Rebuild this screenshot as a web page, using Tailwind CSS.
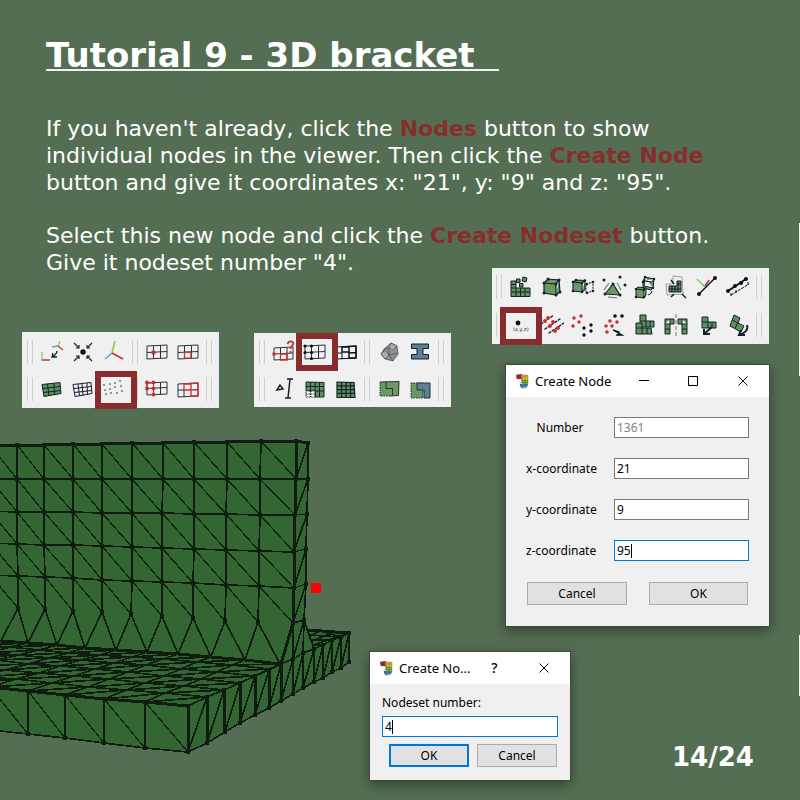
<!DOCTYPE html>
<html lang="en">
<head>
<meta charset="utf-8">
<meta name="viewport" content="width=device-width, initial-scale=1">
<title>Tutorial 9 - 3D bracket</title>
<script src="https://cdn.jsdelivr.net/npm/@tailwindcss/browser@4"></script>
</head>
<body class="bg-[#546e53] font-['DejaVu_Sans',sans-serif] text-white">
<main class="relative min-h-screen overflow-hidden">

  <!-- Right edge strips -->
  <div class="absolute right-0 top-[223px] h-[153px] w-px bg-white"></div>
  <div class="absolute right-0 top-[635px] h-[61px] w-px bg-white"></div>

  <!-- Meshed bracket -->
  <svg class="absolute left-0 top-[430px]" width="360" height="330" viewBox="0 430 360 330" role="img" aria-label="Meshed bracket with a new node">
    <path fill="#336633" d="M0 445L295 441L308 443L307 514L305 620L309 630L349 633L349 662L188 752L0 731Z"/>
    <g id="mesh" fill="none" stroke="#0f1c10" stroke-linejoin="round"></g>
    <rect x="311" y="583" width="10" height="10" fill="#ff0000"/>
  </svg>

  <!-- Slide text -->
  <header class="pl-[46px] pt-[34px]">
    <h1 class="text-[34px]/[42px] font-bold"><span class="inline-block h-[37px] w-[453px] border-b-2 border-white/90 whitespace-nowrap">Tutorial 9 - 3D bracket</span></h1>
  </header>
  <section class="flex flex-col gap-[26px] pl-[46px] pt-[39px] text-[22px]/[27px]">
    <p>If you haven't already, click the <b class="text-[#882d2e]">Nodes</b> button to show<br>individual nodes in the viewer. Then click the <b class="text-[#882d2e]">Create Node</b><br>button and give it coordinates x: "21", y: "9" and z: "95".</p>
    <p>Select this new node and click the <b class="text-[#882d2e]">Create Nodeset</b> button.<br>Give it nodeset number "4".</p>
  </section>

  <!-- View toolbar -->
  <div role="toolbar" aria-label="View" class="absolute left-[22px] top-[332px] flex w-[197px] flex-col bg-[#f0f0f0]">
    <div class="flex h-[38px] items-center gap-[3px] pl-[5px] pt-[2px]">
      <i class="h-6 w-[6px] border-x border-[#cfcfcf]"></i>
      <div class="flex">
        <button aria-label="Rotate axes" class="grid h-8 w-[31px] place-items-center"><svg width="24" height="24" viewBox="0 0 24 24" fill="none" stroke-width="1.3"><path stroke="#9acb4b" d="M2 12v8M20 1l-2 5"/><path stroke="#c8302f" d="M2 20h8M18 6l5 4"/><path stroke="#5aa9c9" d="M18 6l-6 1M1 20h3"/><path stroke="#14202b" d="M17 11q0 3-5 6m1-4l-1 4h5"/></svg></button>
        <button aria-label="Fit view" class="grid h-8 w-[31px] place-items-center"><svg width="24" height="24" viewBox="0 0 24 24" fill="none" stroke="#14202b" stroke-width="1.1"><circle cx="12" cy="12" r="2.2" fill="#07131d"/><path d="M3 3l5 5m0-3v3H5M21 3l-5 5m0-3v3h3M3 21l5-5m0 3v-3H5M21 21l-5-5m0 3v-3h3"/></svg></button>
        <button aria-label="Show axes" class="grid h-8 w-[31px] place-items-center"><svg width="24" height="24" viewBox="0 0 24 24" fill="none" stroke-width="1.6"><path stroke="#8ecb3f" d="M10 13L13 1"/><path stroke="#5aa9c9" d="M10 13l-7 6"/><path stroke="#c8302f" d="M10 13l11 6"/></svg></button>
      </div>
      <i class="h-6 w-[6px] border-x border-[#cfcfcf]"></i>
      <div class="flex">
        <button aria-label="Select node" class="grid h-8 w-[31px] place-items-center"><svg width="24" height="24" viewBox="0 0 24 24" fill="none" stroke="#26333d"><path d="M2 6l20-1v13L2 19zM8.500 6v13M15.500 5.500v13M2 12.500l20-1"/><circle cx="8.500" cy="12.500" r="2.200" fill="#c8302f" stroke="none"/></svg></button>
        <button aria-label="Select element" class="grid h-8 w-[31px] place-items-center"><svg width="24" height="24" viewBox="0 0 24 24" fill="none" stroke="#26333d"><path d="M2 6l20-1v13L2 19zM8.500 6v13M15.500 5.500v13M2 12.500l20-1"/><path stroke="#c8302f" stroke-width="1.300" d="M8.500 12.200h6.500v6H8.500z"/></svg></button>
      </div>
      <i class="h-6 w-[6px] border-x border-[#cfcfcf]"></i>
    </div>
    <div class="flex h-[38px] items-center gap-[3px] pl-[5px]">
      <i class="h-6 w-[6px] border-x border-[#cfcfcf]"></i>
      <div class="flex">
        <button aria-label="Shaded" class="grid h-8 w-[31px] place-items-center"><svg width="24" height="24" viewBox="0 0 24 24" fill="#5f915b" stroke="#14202b"><path d="M2 7.500l18-2 1 11-17 3zM7.500 7l1.500 12M14 6l.5 12M3 11.500l17-2M3.500 15.500l17-2"/></svg></button>
        <button aria-label="Wireframe" class="grid h-8 w-[31px] place-items-center"><svg width="24" height="24" viewBox="0 0 24 24" fill="none" stroke="#14202b"><path d="M2 7.500l18-2 1 11-17 3zM7 7l1.500 12M11 6.500l1 12M16 6l.5 12M3 11.500l17-2M3.500 15.500l17-2"/></svg></button>
        <button aria-label="Nodes" class="grid h-8 w-[31px] place-items-center"><svg width="24" height="24" viewBox="0 0 24 24" fill="none" stroke="#14202b" stroke-width="1.600" stroke-linecap="round"><path d="M2 8h0M8 7h0M13 6h0M18 4h0M3 13h0M8 12h0M13 10h0M19 9h0M4 17h0M9 16h0M15 16h0M20 14h0" /></svg></button>
      </div>
      <i class="h-6 w-[6px] border-x border-[#cfcfcf]"></i>
      <div class="flex">
        <button aria-label="Select nodes" class="grid h-8 w-[31px] place-items-center"><svg width="24" height="24" viewBox="0 0 24 24" fill="none" stroke="#26333d"><path d="M2 6l20-1v12L2 18zM8.500 6v12M15.500 5.500v12M2 11.500l20-1"/><path stroke="#c8302f" d="M2 6h6.500v12M2 6v5.500h6.500"/><path stroke="#c8302f" stroke-width="4" stroke-linecap="round" d="M2 5.500h0M8.500 5.500h0M2 11.500h0M8.500 11.500h0M8.500 17.500h0"/></svg></button>
        <button aria-label="Select elements" class="grid h-8 w-[31px] place-items-center"><svg width="24" height="24" viewBox="0 0 24 24" fill="none" stroke="#26333d"><path d="M2 7l20-1v13L2 20zM2 13h6M8 13v7"/><path stroke="#c8302f" stroke-width="1.300" d="M8 7l14-1v13h-7v-6H8zM15 6.500V13l7-.5"/></svg></button>
      </div>
      <i class="h-6 w-[6px] border-x border-[#cfcfcf]"></i>
    </div>
    <span class="pointer-events-none absolute left-[73px] top-[39px] h-[38px] w-[42px] border-6 border-[#882d2e]"></span>
  </div>

  <!-- Sets toolbar -->
  <div role="toolbar" aria-label="Sets" class="absolute left-[254px] top-[333px] flex w-[197px] flex-col bg-[#f0f0f0]">
    <div class="flex h-[37px] items-center gap-[3px] pl-[5px]">
      <i class="h-6 w-[6px] border-x border-[#cfcfcf]"></i>
      <div class="flex">
        <button aria-label="Query" class="grid h-8 w-[31px] place-items-center"><svg width="24" height="24" viewBox="0 0 24 24" fill="none" stroke="#26333d"><path d="M2 8l19-1v12L2 20zM8.500 8v12M15 8v12M2 14l19-1"/><path stroke="#c8302f" stroke-width="1.300" d="M8.500 14H15v6H8.500z"/><circle cx="2" cy="14" r="1.800" fill="#c8302f" stroke="none"/><path stroke="#c8302f" stroke-width="1.800" d="M15.500 4q1-3 4-2.500 3 1 1 4-2 1.500-2 3.500M18.500 11v2"/></svg></button>
        <button aria-label="Create nodeset" class="grid h-8 w-[31px] place-items-center"><svg width="24" height="24" viewBox="0 0 24 24" fill="none" stroke="#26333d"><path d="M2 6l20-1v13L2 19zM8.500 6v13M15.500 5.500v13M2 12.500l20-1"/><path stroke="#07131d" stroke-width="3.200" stroke-linecap="round" d="M2 6h0M8.500 6h0M2 12.500h0M8.500 12.500h0M8.500 18.500h0"/></svg></button>
        <button aria-label="Create elementset" class="grid h-8 w-[31px] place-items-center"><svg width="24" height="24" viewBox="0 0 24 24" fill="none" stroke="#07131d"><path d="M2 7l20-1v12L2 19zM2 13h6M8 13v6"/><path stroke-width="1.500" d="M8 7l14-1v12h-7v-6H8zM15 6.500V13l7-.5"/></svg></button>
      </div>
      <i class="h-6 w-[6px] border-x border-[#cfcfcf]"></i>
      <div class="flex">
        <button aria-label="Material" class="grid h-8 w-[31px] place-items-center"><svg width="24" height="24" viewBox="0 0 24 24" fill="#8d9296" stroke="#50565c" stroke-width=".8" stroke-linejoin="round"><path d="M7 9l7-6 6 3 1 8-5 7-8-2-4-5z"/><path fill="#a9adb0" d="M14 3l6 3-4 4-4-2zM4 14l4-4 4 5-4 4z"/><path d="M12 8l0 7 9-2M12 15l4 6M7 9l5-1"/></svg></button>
        <button aria-label="Section" class="grid h-8 w-[31px] place-items-center"><svg width="24" height="24" viewBox="0 0 24 24" fill="#5b7f97" stroke="#14202b"><path d="M3.500 4h17v4.500h-5.500v6h5.500V19h-17v-4.500H9v-6H3.500z"/></svg></button>
      </div>
      <i class="h-6 w-[6px] border-x border-[#cfcfcf]"></i>
    </div>
    <div class="flex h-[37px] items-center gap-[3px] pl-[5px]">
      <i class="h-6 w-[6px] border-x border-[#cfcfcf]"></i>
      <div class="flex">
        <button aria-label="Beam orientation" class="grid h-8 w-[31px] place-items-center"><svg width="24" height="24" viewBox="0 0 24 24" fill="none" stroke="#14202b" stroke-width="1.500"><path d="M5 13l3-5 3 4z"/><path d="M16 21l2-19M15 2h6M13 21h6"/></svg></button>
        <button aria-label="Part mesh" class="grid h-8 w-[31px] place-items-center"><svg width="24" height="24" viewBox="0 0 24 24" fill="#5f915b" stroke="#14202b"><path d="M3 5l18 .5v14.500h-9v-6H3zM7.500 5v9M12 5v15M16.500 5v15M3 9.500h18M12 14h9"/><path fill="#fff" stroke-dasharray="1.500 1" d="M3 14h9v6H3zM7.500 14v6M3 17h9"/></svg></button>
        <button aria-label="Full mesh" class="grid h-8 w-[31px] place-items-center"><svg width="24" height="24" viewBox="0 0 24 24" fill="#5f915b" stroke="#14202b" stroke-width="1.200"><path d="M3 5l17 .5 1 15H3zM7.500 5v15M12 5v15M16.500 5v15M3 8.800h17.500M3 12.600h17.500M3 16.400h18"/></svg></button>
      </div>
      <i class="h-6 w-[6px] border-x border-[#cfcfcf]"></i>
      <div class="flex">
        <button aria-label="Split" class="grid h-8 w-[31px] place-items-center"><svg width="24" height="24" viewBox="0 0 24 24" fill="#6a9a62" stroke="#26333d"><path stroke="none" d="M3 5l19-.5V18l-9 1H3z"/><path fill="none" stroke-dasharray="1.500 1" d="M13 19H3V5"/><path fill="none" d="M3 5l19-.5-.5 14-8.500.500M9 5v6.500h6.500V18.500"/></svg></button>
        <button aria-label="Merge" class="grid h-8 w-[31px] place-items-center"><svg width="24" height="24" viewBox="0 0 24 24" fill="#6a9a62" stroke="#26333d"><path stroke-dasharray="1.500 1" d="M3 6h12v15H3z"/><path fill="#5b7f97" d="M9 6h13v15h-6v-8H9z"/></svg></button>
      </div>
      <i class="h-6 w-[6px] border-x border-[#cfcfcf]"></i>
    </div>
    <span class="pointer-events-none absolute left-[42px] top-0 h-[38px] w-[42px] border-6 border-[#882d2e]"></span>
  </div>

  <!-- Mesh editing toolbar -->
  <div role="toolbar" aria-label="Mesh editing" class="absolute left-[492px] top-[268px] flex w-[277px] flex-col bg-[#f0f0f0]">
    <div class="flex h-[38px] items-center gap-[3px] pl-1">
      <i class="h-6 w-[6px] border-x border-[#cfcfcf]"></i>
      <div class="flex">
        <button aria-label="Create elements" class="grid h-8 w-[31px] place-items-center"><svg width="24" height="24" viewBox="0 0 24 24" fill="#5f915b" stroke="#14202b"><path d="M2 6h5v7h14v8.500H2zM2 9.500h5M2 13h5v8.500M11.500 13v8.500M16 13v8.500M2 17h19"/><path d="M7.500 4h3.500v3.500H7.500zM14 2l4 1-1 4-4-1zM10.500 8.500h3.500v3.500h-3.500z"/></svg></button>
        <button aria-label="Copy element" class="grid h-8 w-[31px] place-items-center"><svg width="24" height="24" viewBox="0 0 24 24" fill="#6a9a62" stroke="#14202b" stroke-width="1.200"><path d="M4 8l12 1v11L4 18zM4 8l4-4 11 1-3 4M19 5l1 12-4 3"/><path stroke-width="3" stroke-linecap="round" d="M4 8h0M16 9h0M4 18h0M16 20h0M8 4h0M19 5h0M20 17h0"/></svg></button>
        <button aria-label="Extrude" class="grid h-8 w-[31px] place-items-center"><svg width="24" height="24" viewBox="0 0 24 24" fill="#6a9a62" stroke="#14202b" stroke-width="1.100"><path d="M2 7l9 1v9l-9-1zM2 7l3-2 9 .5-3 2.500M14 5.500v9L11 17"/><path fill="none" stroke-dasharray="2 1" d="M15 9l7-2v9l-7 2z"/><path stroke-width="2.600" stroke-linecap="round" d="M2 7h0M11 8h0M2 16h0M11 17h0M5 5h0M14 5.500h0M16 9h0M22 7h0M16 18h0M22 16h0"/></svg></button>
        <button aria-label="Create element" class="grid h-8 w-[31px] place-items-center"><svg width="26" height="24" viewBox="0 0 26 24" fill="#6a9a62" stroke="#14202b" stroke-width="1.100"><path d="M4 19L12 9l7 11z"/><path fill="none" stroke="#6b747b" d="M3 15l5-7M16 8l4 7M7 22l9 1"/><path stroke-width="3" stroke-linecap="round" d="M4 19h0M12 9h0M19 20h0M3 5h0M19 2h0M24 10h0"/></svg></button>
        <button aria-label="Copy elements" class="grid h-8 w-[31px] place-items-center"><svg width="24" height="24" viewBox="0 0 24 24" fill="#6a9a62" stroke="#14202b"><path d="M12 2l9 2-1 9-9-2zM12 2l-2 4 0 7 8 2 2-2M10 6l9 1 2-3M3 14l8 1v8l-8-1zM3 14l2-2 8 1-2 2M13 13v7l-2 3"/><path stroke-width="2.500" stroke-linecap="round" d="M12 2h0M21 4h0M20 13h0M10 7h0M3 14h0M11 15h0M3 22h0M11 22h0"/><path fill="none" d="M15 20q4-1 4-4"/></svg></button>
        <button aria-label="Scale" class="grid h-8 w-[31px] place-items-center"><svg width="24" height="24" viewBox="0 0 24 24" fill="none" stroke="#14202b"><path stroke="#9a9fa3" d="M2 9h7V1l9 1 1 17-16 1z"/><path fill="#5f915b" d="M5 11h8V6h4v11H5zM5 14h12M8 11v6M11 11v6M14 6v11M13 9h4"/><path d="M7 22l3-3M22 23l-4-4M7 5l3 4" stroke-width="1.500"/></svg></button>
        <button aria-label="Align line" class="grid h-8 w-[31px] place-items-center"><svg width="24" height="24" viewBox="0 0 24 24" fill="none" stroke-width="1.500"><path stroke="#8ecb3f" d="M2 4l7 7"/><path stroke="#c8302f" d="M10 11l4-6"/><path stroke="#5aa9c9" d="M8 10l4 2"/><path stroke="#07131d" d="M4 19L20 3"/><path stroke="#07131d" stroke-width="4" stroke-linecap="round" d="M4 19h0M20 3h0"/></svg></button>
        <button aria-label="Create beam" class="grid h-8 w-[31px] place-items-center"><svg width="24" height="24" viewBox="0 0 24 24" fill="none" stroke="#07131d"><path stroke-width="2" d="M2 16L20 4"/><path stroke-width="4" stroke-linecap="round" d="M2 16h0M9 11h0M15 8h0M20 4h0"/><path stroke-dasharray="3 1" d="M5 20L23 9M5 18v4M10 15v4M22 7v4"/></svg></button>
      </div>
      <i class="h-6 w-[6px] border-x border-[#cfcfcf]"></i>
    </div>
    <div class="flex h-[38px] items-center gap-[3px] pl-1">
      <i class="h-6 w-[6px] border-x border-[#cfcfcf]"></i>
      <div class="flex">
        <button aria-label="Create node" class="grid h-8 w-[31px] place-items-center"><svg width="24" height="24" viewBox="0 0 24 24"><circle cx="9" cy="10" r="2.400" fill="#07131d"/><text x="4" y="18" font-size="5" font-family="DejaVu Sans" fill="#14202b">(x,y,z)</text></svg></button>
        <button aria-label="Copy nodes" class="grid h-8 w-[31px] place-items-center"><svg width="24" height="24" viewBox="0 0 24 24" fill="none" stroke="#14202b" stroke-width="1.400" stroke-linecap="round"><path stroke-dasharray="2 2" d="M1 11L14 2M5 16L20 6M9 20L24 10"/><path stroke="#c8302f" stroke-width="3.800" d="M5 8h0M8 5h0M10 13h0M13 9h0M15 18h0M18 15h0"/></svg></button>
        <button aria-label="Move nodes" class="grid h-8 w-[31px] place-items-center"><svg width="24" height="24" viewBox="0 0 24 24" fill="none" stroke-width="3.400" stroke-linecap="round"><path stroke="#c8302f" d="M3 5h0M10 3h0M8 9h0M2 13h0"/><path stroke="#07131d" d="M13 15h0M20 12h0M20 18h0M13 22h0"/></svg></button>
        <button aria-label="Translate nodes" class="grid h-8 w-[31px] place-items-center"><svg width="24" height="24" viewBox="0 0 24 24" fill="none" stroke-width="3.600" stroke-linecap="round"><path stroke="#c8302f" d="M8 8h0M4 13h0M10 13h0M15 9h0M5 19h0"/><path stroke="#07131d" d="M13 3h0M20 3h0"/><path stroke="#07131d" stroke-width="1.400" fill="#07131d" d="M11 17l9 5-5 0 2-3z"/></svg></button>
        <button aria-label="Copy and stack" class="grid h-8 w-[31px] place-items-center"><svg width="24" height="24" viewBox="0 0 24 24" fill="#5f915b" stroke="#14202b"><path d="M7 2h6v6h8v6H7zM7 8h6v6M17 8v6"/><path d="M3 10h6v5h9l1 6H3zM3 15h6v6M14 15v6"/></svg></button>
        <button aria-label="Mirror" class="grid h-8 w-[31px] place-items-center"><svg width="26" height="24" viewBox="0 0 26 24" fill="#5f915b" stroke="#14202b"><path d="M2 6h9v5H7v10H2zM2 11h5V6M2 16h5M24 6h-9v5h4v10h5zM24 11h-5V6M24 16h-5"/><path stroke="#777" stroke-dasharray="4 2" d="M13 1v23"/></svg></button>
        <button aria-label="Move elements" class="grid h-8 w-[31px] place-items-center"><svg width="24" height="24" viewBox="0 0 24 24" fill="#5f915b" stroke="#14202b"><path d="M7 4h6v5h8v6H7zM7 9h6v6M17 9v6"/><path fill="none" stroke-width="2" d="M17 14l-8 7M9 16v5h6"/></svg></button>
        <button aria-label="Rotate elements" class="grid h-8 w-[31px] place-items-center"><svg width="24" height="24" viewBox="0 0 24 24" fill="#5f915b" stroke="#14202b"><path d="M8 2l6 3-2 5 6 3-3 6L4 13zM6 7l6 3-3 5"/><path fill="none" stroke-width="2" d="M21 12q2 7-8 10m2-5l-2 5h6"/></svg></button>
      </div>
      <i class="h-6 w-[6px] border-x border-[#cfcfcf]"></i>
    </div>
    <span class="pointer-events-none absolute left-2 top-[39px] h-[38px] w-[42px] border-6 border-[#882d2e]"></span>
  </div>

  <!-- Create Node window -->
  <section role="dialog" aria-labelledby="node-title" class="absolute left-[505px] top-[364px] flex w-[265px] flex-col border border-[#3c4a3b] bg-[#f0f0f0] font-['Noto_Sans',sans-serif] text-[12px]/[16px] text-black shadow-[0_4px_12px_rgba(0,0,0,0.4)]">
    <div class="flex h-8 items-center bg-white pl-[10px]">
      <svg width="13" height="15" viewBox="0 0 13 15"><path fill="#b3302e" d="M0 1l6-1v5H1z"/><path fill="#e8c12c" d="M5 1l7 0v5H6z"/><path fill="#74b848" d="M6 6h6v4H6z"/><path fill="#3f90c0" d="M4 10h8l-1 3-5 1-2-2z"/><path fill="none" stroke="#333" stroke-opacity=".6" stroke-width=".5" d="M0 3h12M5 6h7M5 8.500h7M4 11h8M3 0v5M6 0v14M9 1v12M0 1h12v9l-2 4H5l-1-4 2-4V5H1z"/></svg>
      <h2 id="node-title" class="ml-[6px] flex-1 text-[13px] whitespace-nowrap">Create Node</h2>
      <button aria-label="Minimize" class="grid h-8 w-[49px] place-items-center"><svg width="11" height="11" viewBox="0 0 11 11" stroke="#000"><path d="M0 4.500h10"/></svg></button>
      <button aria-label="Maximize" class="grid h-8 w-[49px] place-items-center"><svg width="11" height="11" viewBox="0 0 11 11" fill="none" stroke="#000"><path d="M.5.500h9v9h-9z"/></svg></button>
      <button aria-label="Close" class="grid h-8 w-[51px] place-items-center"><svg width="11" height="11" viewBox="0 0 11 11" stroke="#000"><path d="M.5.500l9 9M9.500.500l-9 9"/></svg></button>
    </div>
    <form class="flex flex-col gap-5 px-5 pt-5 pb-[21px]">
      <div class="flex items-center"><label for="num" class="w-[68px] text-center whitespace-nowrap">Number</label><input id="num" value="1361" disabled class="ml-5 h-[21px] w-[135px] border border-[#7a7a7a] bg-white px-[2px] text-[#838383]"></div>
      <div class="flex items-center"><label for="cx" class="w-[68px] text-center whitespace-nowrap">x-coordinate</label><input id="cx" value="21" class="ml-5 h-[21px] w-[135px] border border-[#7a7a7a] bg-white px-[2px]"></div>
      <div class="flex items-center"><label for="cy" class="w-[68px] text-center whitespace-nowrap">y-coordinate</label><input id="cy" value="9" class="ml-5 h-[21px] w-[135px] border border-[#7a7a7a] bg-white px-[2px]"></div>
      <div class="relative flex items-center"><label for="cz" class="w-[68px] text-center whitespace-nowrap">z-coordinate</label><input id="cz" value="95" class="ml-5 h-[21px] w-[135px] border border-[#0078d7] bg-white px-[2px]"><span class="absolute left-[105px] top-1 h-[14px] w-px bg-black"></span></div>
      <div class="flex gap-[22px] pt-px pl-px"><button type="button" class="h-[23px] w-[100px] border border-[#adadad] bg-[#e1e1e1]">Cancel</button><button type="button" class="h-[23px] w-[99px] border border-[#adadad] bg-[#e1e1e1]">OK</button></div>
    </form>
  </section>

  <!-- Create Nodeset window -->
  <section role="dialog" aria-labelledby="set-title" class="absolute left-[369px] top-[651px] flex w-[202px] flex-col border border-[#3c4a3b] bg-[#f0f0f0] font-['Noto_Sans',sans-serif] text-[12px]/[16px] text-black shadow-[0_4px_12px_rgba(0,0,0,0.4)]">
    <div class="flex h-8 items-center bg-white pl-[10px]">
      <svg class="shrink-0" width="13" height="15" viewBox="0 0 13 15"><path fill="#b3302e" d="M0 1l6-1v5H1z"/><path fill="#e8c12c" d="M5 1l7 0v5H6z"/><path fill="#74b848" d="M6 6h6v4H6z"/><path fill="#3f90c0" d="M4 10h8l-1 3-5 1-2-2z"/><path fill="none" stroke="#333" stroke-opacity=".6" stroke-width=".5" d="M0 3h12M5 6h7M5 8.500h7M4 11h8M3 0v5M6 0v14M9 1v12M0 1h12v9l-2 4H5l-1-4 2-4V5H1z"/></svg>
      <h2 id="set-title" class="ml-[6px] min-w-0 flex-1 text-[13px] whitespace-nowrap">Create No...</h2>
      <button aria-label="Help" class="h-8 w-[49px] shrink-0 text-[14px] font-medium">?</button>
      <button aria-label="Close" class="grid h-8 w-[51px] shrink-0 place-items-center"><svg width="11" height="11" viewBox="0 0 11 11" stroke="#000"><path d="M.5.500l9 9M9.500.500l-9 9"/></svg></button>
    </div>
    <form class="relative flex flex-col px-3 pt-[11px] pb-[13px]">
      <label for="setnum">Nodeset number:</label>
      <input id="setnum" value="4" class="mt-[5px] h-[21px] border border-[#0078d7] bg-white px-[2px]">
      <span class="absolute left-[22px] top-9 h-[14px] w-px bg-black"></span>
      <div class="mt-[7px] flex gap-2 pl-[7px]"><button type="button" class="h-[23px] w-20 border-2 border-[#0078d7] bg-[#e1e1e1]">OK</button><button type="button" class="h-[23px] w-20 border border-[#adadad] bg-[#e1e1e1]">Cancel</button></div>
    </form>
  </section>

  <footer class="absolute left-[672px] top-[741px] text-[26px]/[32px] font-bold">14/24</footer>
</main>
<script>
  // Vertex tables of the bracket mesh; edges are drawn as one path per stroke width.
  const wall = [
    [[-10,445],[17,445],[44,445],[73,444],[102,444],[132,443],[163,443],[194,442],[227,442],[261,441],[296,441]],
    [[-10,479],[17,479],[44,479],[73,479],[102,479],[132,479],[163,479],[194,479],[227,479],[260,479],[296,479]],
    [[-10,511],[17,512],[44,512],[73,512],[102,513],[132,513],[162,513],[194,514],[226,514],[260,515],[295,515]],
    [[-10,543],[17,544],[44,545],[73,545],[102,546],[132,547],[162,548],[194,549],[226,550],[259,551],[294,552]],
    [[-10,575],[18,576],[45,577],[73,578],[102,580],[132,581],[162,582],[193,583],[226,585],[259,586],[294,588]],
    [[-9,607],[18,608],[45,609],[73,611],[102,612],[131,614],[162,616],[193,618],[225,621],[258,622],[293,623]]];
  const foot = [[1,641],[28,643],[57,645],[85,648],[116,650],[147,652],[178,654],[211,657],[245,660],[280,664]];
  const end = [[308,443],[308,479],[307,514],[306,549],[306,584],[304,620]];
  const front = [[-10,687],[28,691],[65,695],[104,699],[145,702],[188,706]];
  const under = [[-10,730],[28,734],[65,738],[104,743],[145,748],[188,752]];
  const side = [[188,706],[207,697],[224,690],[240,683],[255,676],[269,670],[281,664],[293,659],[303,653],[314,649],[323,645],[332,640],[341,637],[349,633]];
  const low = [[188,752],[207,743],[225,732],[240,723],[255,715],[269,708],[281,701],[293,694],[303,688],[314,682],[323,678],[332,672],[341,668],[349,662]];
  const thin = [], mid = [], thick = [], dots = [];
  const seg = (a, b) => `M${a}L${b}`;
  wall.forEach((r, j) => {
    if (j < 5) mid.push('M' + r.join('L'));
    r.forEach((p, i) => {
      if (i) dots.push(p);
      if (j < 5) {
        (i === 10 ? thick : mid).push(seg(p, wall[j + 1][i]));
        if (i < 10) thin.push(seg(p, wall[j + 1][i + 1]));
      } else if (i) { mid.push(seg(p, foot[i - 1])); if (i < 10) mid.push(seg(p, foot[i])); }
    });
  });
  thick.push('M' + wall[0].join('L') + 'L308,443', 'M293,623L281,664');
  mid.push('M' + end.join('L') + 'L314,649', 'M293,623L293,659', 'M304,620L303,653', 'M304,620L293,659', 'M293,623L304,620');
  thick.push('M' + foot.join('L'));
  end.forEach((p, j) => { dots.push(p); thin.push(seg(p, wall[j][10])); if (j < 5) mid.push(seg(p, wall[j + 1][10])); });
  front.forEach((p, i) => { thick.push(seg(p, front[i + 1] || p)); mid.push(seg(p, under[i]), seg(under[i], under[i + 1] || under[i])); if (i < 5) thin.push(seg(p, under[i + 1])); dots.push(p, under[i]); });
  side.forEach((p, i) => { (i < 7 ? thick : mid).push(seg(p, low[i])); dots.push(p, low[i]); if (i < 13) { mid.push(seg(p, side[i + 1]), seg(low[i], low[i + 1]), seg(low[i], side[i + 1])); } });
  // Top face of the base: interpolate between the front edge and the foot of the wall.
  const near = [[-350,655],[-300,659],[-260,663],[-222,667],[-186,670],[-150,673],[-115,677],[-80,680],[-45,684],[-10,687],[28,691],[65,695],[104,699],[145,702],[188,706]];
  const far = [[-120,630],[-94,632],[-70,634],[-48,636],[-24,639],[1,641],[28,643],[57,645],[85,648],[116,650],[147,652],[178,654],[211,657],[245,660],[281,664]];
  const at = (i, k) => { const t = (side[k][0] - 188) / 93; return [near[i][0] + (far[i][0] - near[i][0]) * t, near[i][1] + (far[i][1] - near[i][1]) * t].map(Math.round); };
  for (let i = 0; i < 15; i++) for (let k = 0; k < 7; k++) {
    if (i < 14) mid.push(seg(at(i, k), at(i + 1, k)));
    if (k < 6) mid.push(seg(at(i, k), at(i, k + 1)));
    if (i < 14 && k < 6) mid.push(seg(at(i, k), at(i + 1, k + 1)));
  }
  // Part of the base behind the wall.
  thick.push('M308,630L349,633');
  mid.push('M309,635L341,637M311,640L332,640M312,645L323,645M320,631L310,636M335,632L312,641M349,633L313,645M320,631L341,637');
  const draw = (d, w) => `<path shape-rendering="crispEdges" stroke-width="${w}" d="${d.join('')}"/>`;
  document.getElementById('mesh').innerHTML = draw(thin, 1.2) + draw(mid, 1.7) + draw(thick, 3) +
    `<path stroke="none" fill="#0f1c10" d="${dots.map(p => `M${p[0] - 2},${p[1] - 2}h4v4h-4z`).join('')}"/>`;
</script>
</body>
</html>
